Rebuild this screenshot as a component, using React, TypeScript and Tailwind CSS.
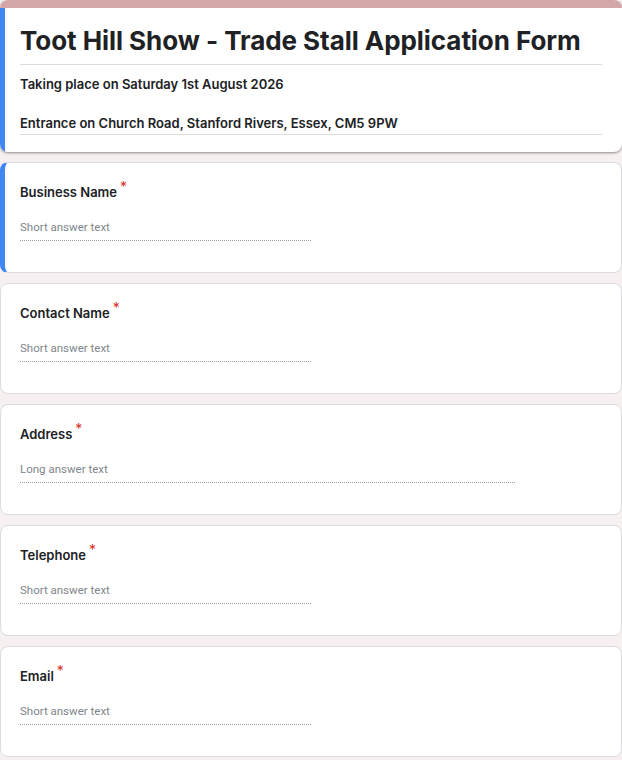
import React from "react";

type Question = {
  label: string;
  placeholder: string;
  long?: boolean;
  active?: boolean;
};

const questions: Question[] = [
  { label: "Business Name", placeholder: "Short answer text", active: true },
  { label: "Contact Name", placeholder: "Short answer text" },
  { label: "Address", placeholder: "Long answer text", long: true },
  { label: "Telephone", placeholder: "Short answer text" },
  { label: "Email", placeholder: "Short answer text" },
];

function QuestionCard({ q }: { q: Question }) {
  return (
    <div
      className={
        "h-[111px] rounded-lg border border-[#dadce0] bg-white pt-[19px] pr-5 " +
        (q.active ? "border-l-[5px] border-l-[#4285f4] pl-[15px]" : "pl-[19px]")
      }
    >
      <div className="flex items-start font-['Inter',sans-serif] text-[13px] font-semibold leading-5 text-[#202124]">
        {q.label}
        <span className="ml-[3px] -mt-[5px] text-[14px] font-normal text-[#d93025]">*</span>
      </div>
      <div
        className={
          "mt-[17px] border-b border-dotted border-[#9aa0a6] pb-[5px] font-['Roboto',sans-serif] text-[11.5px] leading-4 text-[#80868b] " +
          (q.long ? "w-[495px]" : "w-[291px]")
        }
      >
        {q.placeholder}
      </div>
    </div>
  );
}

export default function App() {
  return (
    <div className="min-h-screen bg-[#f6f0f0]">
      <div className="flex flex-col gap-[10px]">
        {/* ── Header ─────────────────────────────────────────────── */}
        <div className="overflow-hidden rounded-lg bg-white shadow-[0_1px_2px_rgba(0,0,0,0.3),0_1px_3px_1px_rgba(0,0,0,0.1)]">
          <div className="h-2 bg-[#d3a7a8]" />
          <div className="border-l-[5px] border-[#4285f4] pl-[15px] pr-5 pt-[17px] pb-[17px] font-['Inter',sans-serif] text-[#202124]">
            <h1 className="border-b border-[#dadce0] pb-[7px] text-[26px] font-bold leading-8 tracking-[-0.05px]">
              Toot Hill Show - Trade Stall Application Form
            </h1>
            <p className="mt-[10px] border-b border-[#dadce0] text-[13px] font-semibold leading-[19.5px] whitespace-pre-line">
              {"Taking place on Saturday 1st August 2026\n\nEntrance on Church Road, Stanford Rivers, Essex, CM5 9PW"}
            </p>
          </div>
        </div>

        {questions.map((q) => (
          <QuestionCard key={q.label} q={q} />
        ))}
      </div>
    </div>
  );
}
